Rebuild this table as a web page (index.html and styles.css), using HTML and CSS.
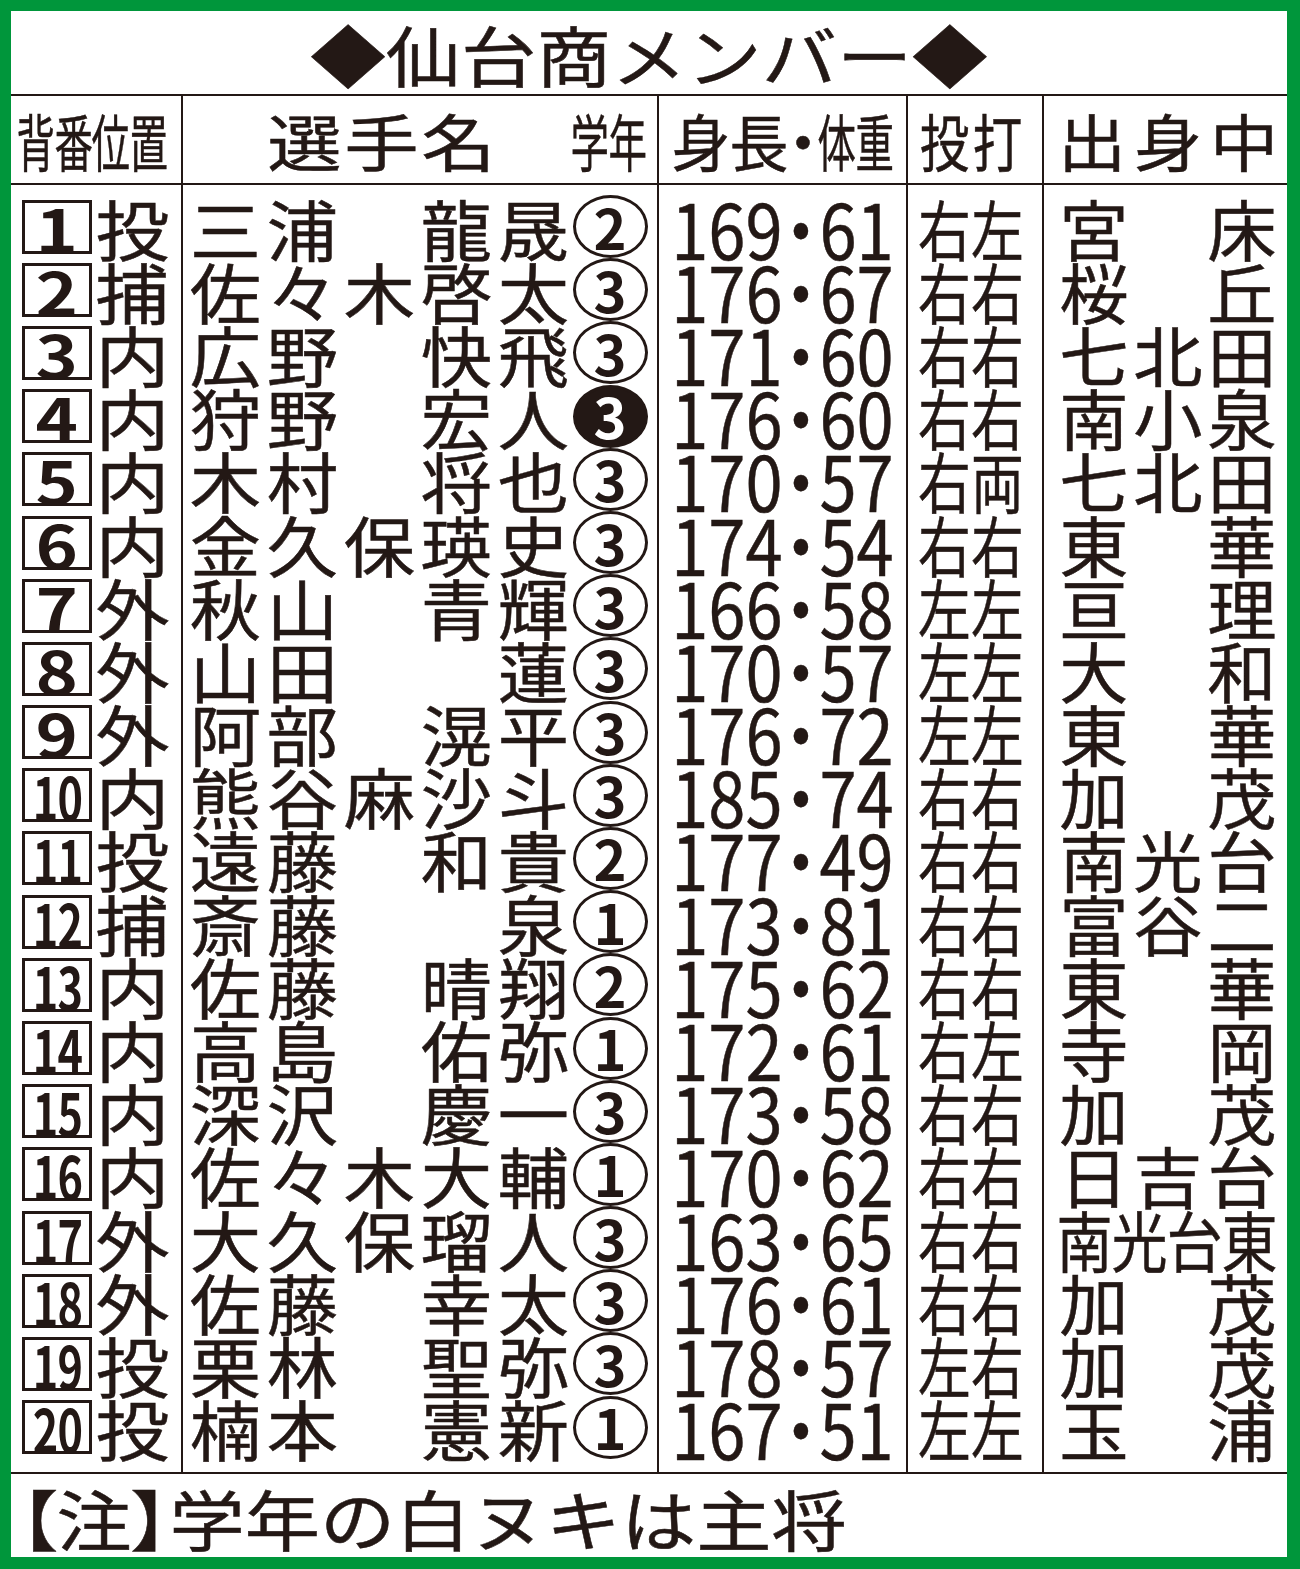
FILE: index.html
```html
<!DOCTYPE html>
<html lang="ja">
<head>
<meta charset="utf-8">
<title>仙台商メンバー</title>
<link rel="stylesheet" href="styles.css">
</head>
<body>
<div class="sheet">
  <div class="title"><span class="title-text">◆仙台商メンバー◆</span></div>
  <div class="row head">
    <div class="c1"><span class="hn">背</span><span class="hn">番</span><span class="hn">位</span><span class="hn">置</span></div>
    <div class="c2"><span class="hx">選</span><span class="hx">手</span><span class="hx">名</span><span class="hgap"></span><span class="hn">学</span><span class="hn">年</span></div>
    <div class="c3 center"><span class="hm">身</span><span class="hm">長</span><span class="hd">・</span><span class="hn">体</span><span class="hn">重</span></div>
    <div class="c4"><span class="bt">投</span><span class="bt">打</span></div>
    <div class="c5"><span class="hs">出</span><span class="hs">身</span><span class="hs">中</span></div>
  </div>
  <div class="tbody">
    <div class="row first">
      <div class="c1"><span class="box"><span class="bn">1</span></span><span class="pos">投</span></div>
      <div class="c2"><span class="nm">三</span><span class="nm">浦</span><span class="nm"></span><span class="nm">龍</span><span class="nm">晟</span><span class="gr"><span class="cir">2</span></span></div>
      <div class="c3 center"><span class="num">169<span class="dot">・</span>61</span></div>
      <div class="c4"><span class="bt">右</span><span class="bt">左</span></div>
      <div class="c5"><span class="sc">宮</span><span class="sc"></span><span class="sc">床</span></div>
    </div>
    <div class="row">
      <div class="c1"><span class="box"><span class="bn">2</span></span><span class="pos">捕</span></div>
      <div class="c2"><span class="nm">佐</span><span class="nm">々</span><span class="nm">木</span><span class="nm">啓</span><span class="nm">太</span><span class="gr"><span class="cir">3</span></span></div>
      <div class="c3 center"><span class="num">176<span class="dot">・</span>67</span></div>
      <div class="c4"><span class="bt">右</span><span class="bt">右</span></div>
      <div class="c5"><span class="sc">桜</span><span class="sc"></span><span class="sc">丘</span></div>
    </div>
    <div class="row">
      <div class="c1"><span class="box"><span class="bn">3</span></span><span class="pos">内</span></div>
      <div class="c2"><span class="nm">広</span><span class="nm">野</span><span class="nm"></span><span class="nm">快</span><span class="nm">飛</span><span class="gr"><span class="cir">3</span></span></div>
      <div class="c3 center"><span class="num">171<span class="dot">・</span>60</span></div>
      <div class="c4"><span class="bt">右</span><span class="bt">右</span></div>
      <div class="c5"><span class="sc">七</span><span class="sc">北</span><span class="sc">田</span></div>
    </div>
    <div class="row">
      <div class="c1"><span class="box"><span class="bn">4</span></span><span class="pos">内</span></div>
      <div class="c2"><span class="nm">狩</span><span class="nm">野</span><span class="nm"></span><span class="nm">宏</span><span class="nm">人</span><span class="gr"><span class="cir neg">3</span></span></div>
      <div class="c3 center"><span class="num">176<span class="dot">・</span>60</span></div>
      <div class="c4"><span class="bt">右</span><span class="bt">右</span></div>
      <div class="c5"><span class="sc">南</span><span class="sc">小</span><span class="sc">泉</span></div>
    </div>
    <div class="row">
      <div class="c1"><span class="box"><span class="bn">5</span></span><span class="pos">内</span></div>
      <div class="c2"><span class="nm">木</span><span class="nm">村</span><span class="nm"></span><span class="nm">将</span><span class="nm">也</span><span class="gr"><span class="cir">3</span></span></div>
      <div class="c3 center"><span class="num">170<span class="dot">・</span>57</span></div>
      <div class="c4"><span class="bt">右</span><span class="bt">両</span></div>
      <div class="c5"><span class="sc">七</span><span class="sc">北</span><span class="sc">田</span></div>
    </div>
    <div class="row">
      <div class="c1"><span class="box"><span class="bn">6</span></span><span class="pos">内</span></div>
      <div class="c2"><span class="nm">金</span><span class="nm">久</span><span class="nm">保</span><span class="nm">瑛</span><span class="nm">史</span><span class="gr"><span class="cir">3</span></span></div>
      <div class="c3 center"><span class="num">174<span class="dot">・</span>54</span></div>
      <div class="c4"><span class="bt">右</span><span class="bt">右</span></div>
      <div class="c5"><span class="sc">東</span><span class="sc"></span><span class="sc">華</span></div>
    </div>
    <div class="row">
      <div class="c1"><span class="box"><span class="bn">7</span></span><span class="pos">外</span></div>
      <div class="c2"><span class="nm">秋</span><span class="nm">山</span><span class="nm"></span><span class="nm">青</span><span class="nm">輝</span><span class="gr"><span class="cir">3</span></span></div>
      <div class="c3 center"><span class="num">166<span class="dot">・</span>58</span></div>
      <div class="c4"><span class="bt">左</span><span class="bt">左</span></div>
      <div class="c5"><span class="sc">亘</span><span class="sc"></span><span class="sc">理</span></div>
    </div>
    <div class="row">
      <div class="c1"><span class="box"><span class="bn">8</span></span><span class="pos">外</span></div>
      <div class="c2"><span class="nm">山</span><span class="nm">田</span><span class="nm"></span><span class="nm"></span><span class="nm">蓮</span><span class="gr"><span class="cir">3</span></span></div>
      <div class="c3 center"><span class="num">170<span class="dot">・</span>57</span></div>
      <div class="c4"><span class="bt">左</span><span class="bt">左</span></div>
      <div class="c5"><span class="sc">大</span><span class="sc"></span><span class="sc">和</span></div>
    </div>
    <div class="row">
      <div class="c1"><span class="box"><span class="bn">9</span></span><span class="pos">外</span></div>
      <div class="c2"><span class="nm">阿</span><span class="nm">部</span><span class="nm"></span><span class="nm">滉</span><span class="nm">平</span><span class="gr"><span class="cir">3</span></span></div>
      <div class="c3 center"><span class="num">176<span class="dot">・</span>72</span></div>
      <div class="c4"><span class="bt">左</span><span class="bt">左</span></div>
      <div class="c5"><span class="sc">東</span><span class="sc"></span><span class="sc">華</span></div>
    </div>
    <div class="row">
      <div class="c1"><span class="box two"><span class="bn">10</span></span><span class="pos">内</span></div>
      <div class="c2"><span class="nm">熊</span><span class="nm">谷</span><span class="nm">麻</span><span class="nm">沙</span><span class="nm">斗</span><span class="gr"><span class="cir">3</span></span></div>
      <div class="c3 center"><span class="num">185<span class="dot">・</span>74</span></div>
      <div class="c4"><span class="bt">右</span><span class="bt">右</span></div>
      <div class="c5"><span class="sc">加</span><span class="sc"></span><span class="sc">茂</span></div>
    </div>
    <div class="row">
      <div class="c1"><span class="box two"><span class="bn">11</span></span><span class="pos">投</span></div>
      <div class="c2"><span class="nm">遠</span><span class="nm">藤</span><span class="nm"></span><span class="nm">和</span><span class="nm">貴</span><span class="gr"><span class="cir">2</span></span></div>
      <div class="c3 center"><span class="num">177<span class="dot">・</span>49</span></div>
      <div class="c4"><span class="bt">右</span><span class="bt">右</span></div>
      <div class="c5"><span class="sc">南</span><span class="sc">光</span><span class="sc">台</span></div>
    </div>
    <div class="row">
      <div class="c1"><span class="box two"><span class="bn">12</span></span><span class="pos">捕</span></div>
      <div class="c2"><span class="nm">斎</span><span class="nm">藤</span><span class="nm"></span><span class="nm"></span><span class="nm">泉</span><span class="gr"><span class="cir">1</span></span></div>
      <div class="c3 center"><span class="num">173<span class="dot">・</span>81</span></div>
      <div class="c4"><span class="bt">右</span><span class="bt">右</span></div>
      <div class="c5"><span class="sc">富</span><span class="sc">谷</span><span class="sc">二</span></div>
    </div>
    <div class="row">
      <div class="c1"><span class="box two"><span class="bn">13</span></span><span class="pos">内</span></div>
      <div class="c2"><span class="nm">佐</span><span class="nm">藤</span><span class="nm"></span><span class="nm">晴</span><span class="nm">翔</span><span class="gr"><span class="cir">2</span></span></div>
      <div class="c3 center"><span class="num">175<span class="dot">・</span>62</span></div>
      <div class="c4"><span class="bt">右</span><span class="bt">右</span></div>
      <div class="c5"><span class="sc">東</span><span class="sc"></span><span class="sc">華</span></div>
    </div>
    <div class="row">
      <div class="c1"><span class="box two"><span class="bn">14</span></span><span class="pos">内</span></div>
      <div class="c2"><span class="nm">高</span><span class="nm">島</span><span class="nm"></span><span class="nm">佑</span><span class="nm">弥</span><span class="gr"><span class="cir">1</span></span></div>
      <div class="c3 center"><span class="num">172<span class="dot">・</span>61</span></div>
      <div class="c4"><span class="bt">右</span><span class="bt">左</span></div>
      <div class="c5"><span class="sc">寺</span><span class="sc"></span><span class="sc">岡</span></div>
    </div>
    <div class="row">
      <div class="c1"><span class="box two"><span class="bn">15</span></span><span class="pos">内</span></div>
      <div class="c2"><span class="nm">深</span><span class="nm">沢</span><span class="nm"></span><span class="nm">慶</span><span class="nm">一</span><span class="gr"><span class="cir">3</span></span></div>
      <div class="c3 center"><span class="num">173<span class="dot">・</span>58</span></div>
      <div class="c4"><span class="bt">右</span><span class="bt">右</span></div>
      <div class="c5"><span class="sc">加</span><span class="sc"></span><span class="sc">茂</span></div>
    </div>
    <div class="row">
      <div class="c1"><span class="box two"><span class="bn">16</span></span><span class="pos">内</span></div>
      <div class="c2"><span class="nm">佐</span><span class="nm">々</span><span class="nm">木</span><span class="nm">大</span><span class="nm">輔</span><span class="gr"><span class="cir">1</span></span></div>
      <div class="c3 center"><span class="num">170<span class="dot">・</span>62</span></div>
      <div class="c4"><span class="bt">右</span><span class="bt">右</span></div>
      <div class="c5"><span class="sc">日</span><span class="sc">吉</span><span class="sc">台</span></div>
    </div>
    <div class="row">
      <div class="c1"><span class="box two"><span class="bn">17</span></span><span class="pos">外</span></div>
      <div class="c2"><span class="nm">大</span><span class="nm">久</span><span class="nm">保</span><span class="nm">瑠</span><span class="nm">人</span><span class="gr"><span class="cir">3</span></span></div>
      <div class="c3 center"><span class="num">163<span class="dot">・</span>65</span></div>
      <div class="c4"><span class="bt">右</span><span class="bt">右</span></div>
      <div class="c5"><span class="sc4">南</span><span class="sc4">光</span><span class="sc4">台</span><span class="sc4">東</span></div>
    </div>
    <div class="row">
      <div class="c1"><span class="box two"><span class="bn">18</span></span><span class="pos">外</span></div>
      <div class="c2"><span class="nm">佐</span><span class="nm">藤</span><span class="nm"></span><span class="nm">幸</span><span class="nm">太</span><span class="gr"><span class="cir">3</span></span></div>
      <div class="c3 center"><span class="num">176<span class="dot">・</span>61</span></div>
      <div class="c4"><span class="bt">右</span><span class="bt">右</span></div>
      <div class="c5"><span class="sc">加</span><span class="sc"></span><span class="sc">茂</span></div>
    </div>
    <div class="row">
      <div class="c1"><span class="box two"><span class="bn">19</span></span><span class="pos">投</span></div>
      <div class="c2"><span class="nm">栗</span><span class="nm">林</span><span class="nm"></span><span class="nm">聖</span><span class="nm">弥</span><span class="gr"><span class="cir">3</span></span></div>
      <div class="c3 center"><span class="num">178<span class="dot">・</span>57</span></div>
      <div class="c4"><span class="bt">左</span><span class="bt">右</span></div>
      <div class="c5"><span class="sc">加</span><span class="sc"></span><span class="sc">茂</span></div>
    </div>
    <div class="row last">
      <div class="c1"><span class="box two"><span class="bn">20</span></span><span class="pos">投</span></div>
      <div class="c2"><span class="nm">楠</span><span class="nm">本</span><span class="nm"></span><span class="nm">憲</span><span class="nm">新</span><span class="gr"><span class="cir">1</span></span></div>
      <div class="c3 center"><span class="num">167<span class="dot">・</span>51</span></div>
      <div class="c4"><span class="bt">左</span><span class="bt">左</span></div>
      <div class="c5"><span class="sc">玉</span><span class="sc"></span><span class="sc">浦</span></div>
    </div>
  </div>
  <div class="note"><span class="note-text"><span class="br">【</span>注<span class="br">】</span>学年の白ヌキは主将</span></div>
</div>
</body>
</html>
```

FILE: styles.css
```css
* { box-sizing: border-box; margin: 0; padding: 0; }
html, body { background: #fff; }
body {
  margin: 0;
  font-family: "Noto Sans CJK JP", "Noto Sans", sans-serif;
  color: #231815;
}
.sheet {
  width: 1300px;
  height: 1569px;
  border-style: solid;
  border-color: #00963b;
  border-width: 11px 13px 12px 11px;
  background: #fff;
  display: flex;
  flex-direction: column;
  -webkit-text-stroke: 0.5px #231815;
}
.title {
  height: 85px;
  flex: none;
  border-bottom: 2px solid #231815;
  display: flex;
  align-items: center;
  justify-content: center;
}
.title-text {
  display: inline-block;
  font-size: 66px;
  line-height: 1;
  transform: scaleX(1.14);
}

.tbody { flex: none; }
.row {
  display: grid;
  grid-template-columns: 170px 476px 249px 136px 245px;
  grid-template-rows: 100%;
  height: 63.2px;
  font-size: 66px;
  line-height: 1;
}
.row > div {
  display: flex;
  align-items: center;
  min-height: 0;
}
.row > div + div { border-left: 2px solid #231815; }
.row .center { justify-content: center; }

.head {
  height: 89px;
  flex: none;
  border-bottom: 2px solid #231815;
  font-size: 62px;
}
.first { height: 73.2px; }
.first > div { padding-top: 10px; }
.last { height: 76.2px; }
.last > div { padding-bottom: 13px; }

.c1 { padding-left: 11px; }
.c2 { padding-left: 4px; }
.c4 { padding-left: 10px; }
.c5 { padding-left: 13px; }
.head .c1 { padding-left: 6px; }
.head .c2 { padding-left: 83px; }
.head .c5 { padding-left: 10px; }

/* glyph slots */
.hn, .hx, .hm, .hd, .hs, .pos, .nm, .gr, .bt, .sc, .sc4 {
  display: inline-flex;
  justify-content: center;
  align-items: center;
  flex: none;
}
.hn { width: 37.5px; transform: scaleX(0.62); }
.hx { width: 77px; transform: scaleX(1.2); }
.hgap { width: 74px; flex: none; }
.hm { width: 58px; transform: scaleX(0.95); }
.hd { width: 30px; }
.hs { width: 76px; transform: scaleX(1.1); }

.box {
  width: 70px;
  height: 54px;
  border: 3px solid #231815;
  display: inline-flex;
  align-items: center;
  justify-content: center;
  flex: none;
  font-size: 60px;
  font-weight: 700;
  -webkit-text-stroke: 0;
}
.bn { display: inline-block; line-height: 1; transform: scaleX(1.2); }
.box.two .bn { transform: scaleX(0.72); letter-spacing: -1px; }
.pos { width: 77px; margin-left: 2px; transform: scaleX(1.12); }

.nm { width: 77px; transform: scaleX(1.08); }
.gr { width: 76px; }
.cir {
  width: 75px;
  height: 63px;
  flex: none;
  border: 3px solid #231815;
  border-radius: 50%;
  display: inline-flex;
  align-items: center;
  justify-content: center;
  font-size: 56px;
  font-weight: 700;
  line-height: 1;
  -webkit-text-stroke: 0;
  padding-bottom: 2px;
}
.cir.neg {
  background: #231815;
  color: #fff;
}

.num {
  display: inline-flex;
  align-items: center;
  font-size: 76px;
  transform: scaleX(0.88);
}
.dot {
  display: inline-flex;
  justify-content: center;
  width: 42px;
}

.bt { width: 53px; transform: scaleX(0.8); }
.sc { width: 74px; transform: scaleX(1.05); }
.sc4 { width: 55px; transform: scaleX(0.85); }

.note {
  flex: 1;
  border-top: 2px solid #231815;
  display: flex;
  align-items: center;
  padding-left: 8px;
  padding-top: 4px;
}
.note-text {
  display: inline-block;
  font-size: 66px;
  line-height: 1;
  white-space: nowrap;
  transform: scaleX(1.14);
  transform-origin: left center;
}
.br { font-feature-settings: "palt"; }
```
